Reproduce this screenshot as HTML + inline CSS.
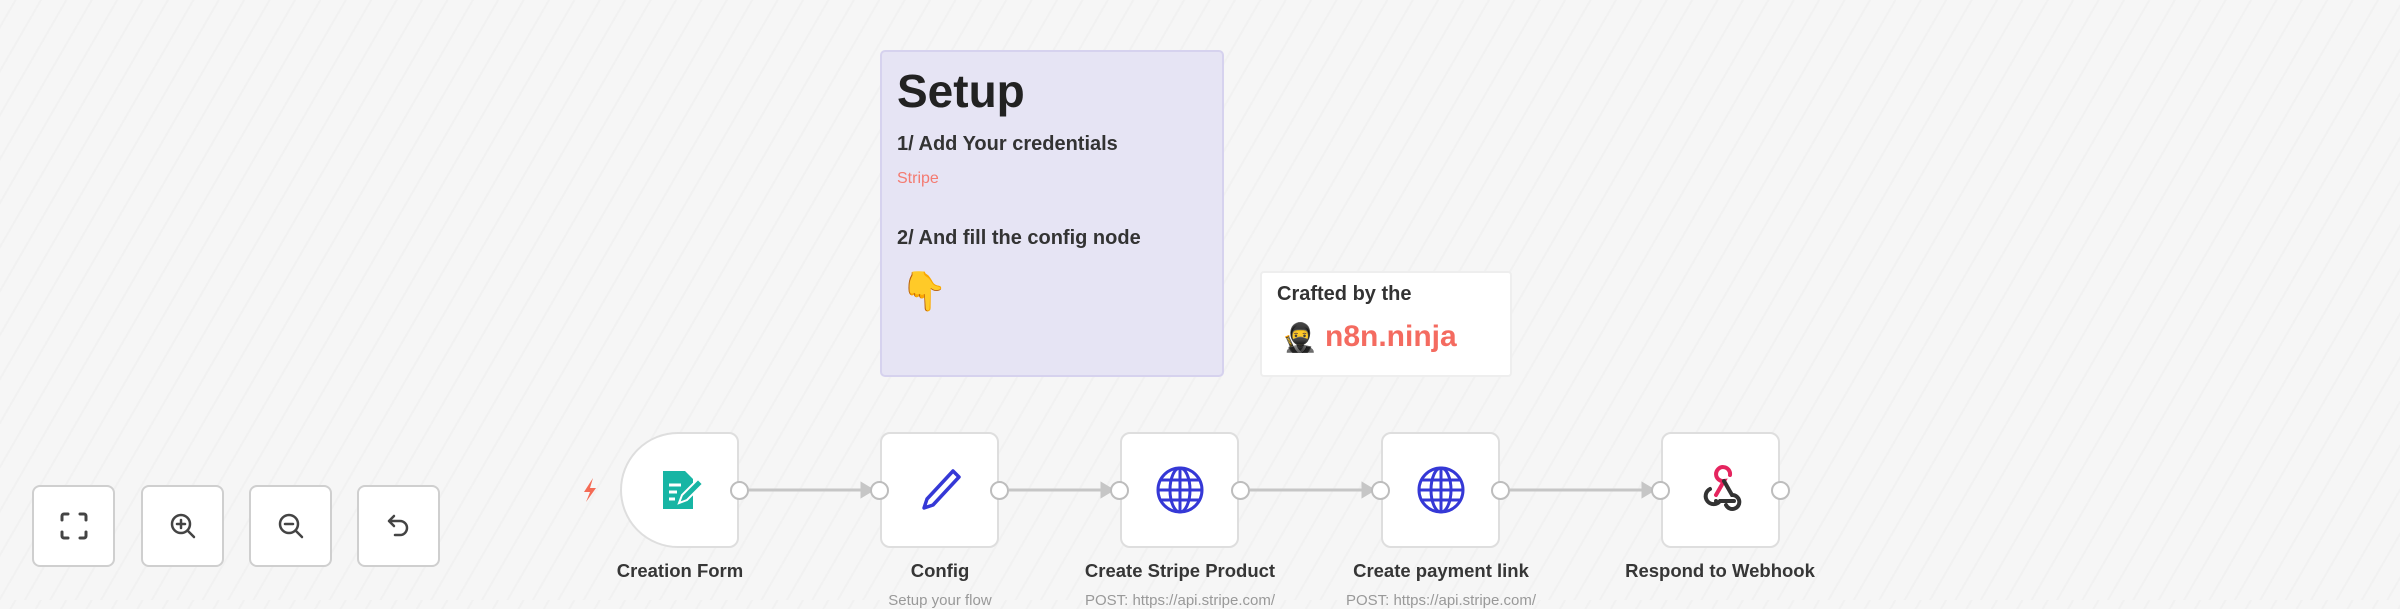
<!DOCTYPE html>
<html><head><meta charset="utf-8"><style>
*{margin:0;padding:0;box-sizing:border-box}
body{width:2400px;height:600px;overflow:hidden;position:relative;font-family:"Liberation Sans",sans-serif;
background:#f6f6f6 repeating-linear-gradient(-60deg,#f6f6f6 0 10px,#f1f1f1 10px 12px,#f6f6f6 12px 22px);}
.abs{position:absolute}
.node{position:absolute;top:432px;width:119px;height:116px;background:#fff;border:2px solid #dedede;border-radius:10px;display:flex;align-items:center;justify-content:center}
.dot{position:absolute;width:19px;height:19px;border-radius:50%;background:#fff;border:2px solid #bdbdbd;top:481px}
.lbl{position:absolute;top:560px;font-size:18.5px;font-weight:bold;color:#363636;text-align:center;width:300px}
.sub{position:absolute;top:592px;font-size:15px;color:#999;text-align:center;width:300px}
.ctl{position:absolute;top:485px;width:83px;height:82px;background:#fff;border:2px solid #cfcfcf;border-radius:8px;display:flex;align-items:center;justify-content:center}
</style></head><body>

<div class="abs" style="left:880px;top:50px;width:344px;height:327px;background:#e6e4f4;border:2px solid #d6d2ee;border-radius:5px"></div>
<div class="abs" style="left:897px;top:64px;font-size:46px;font-weight:bold;color:#222">Setup</div>
<div class="abs" style="left:897px;top:133px;font-size:20px;font-weight:bold;color:#333">1/ Add Your credentials</div>
<div class="abs" style="left:897px;top:170px;font-size:16px;color:#f47a70">Stripe</div>
<div class="abs" style="left:897px;top:227px;font-size:20px;font-weight:bold;color:#333">2/ And fill the config node</div>
<div class="abs" style="left:900px;top:270px;font-size:38px;line-height:44px">👇</div>

<div class="abs" style="left:1260px;top:271px;width:252px;height:106px;background:#fff;border:2px solid #eee;border-radius:4px"></div>
<div class="abs" style="left:1277px;top:283px;font-size:20px;font-weight:bold;color:#333">Crafted by the</div>
<div class="abs" style="left:1282px;top:320px;font-size:28px;line-height:36px">🥷</div>
<div class="abs" style="left:1325px;top:320px;font-size:30px;font-weight:bold;color:#f46b60">n8n.ninja</div>

<svg class="abs" style="left:0;top:0" width="2400" height="600">
<g stroke="#c6c6c6" stroke-width="3" fill="#c6c6c6">
<line x1="749" y1="490" x2="866" y2="490"/><path d="M862 484 L872 490 L862 496Z"/>
<line x1="1009" y1="490" x2="1106" y2="490"/><path d="M1102 484 L1112 490 L1102 496Z"/>
<line x1="1250" y1="490" x2="1367" y2="490"/><path d="M1363 484 L1373 490 L1363 496Z"/>
<line x1="1510" y1="490" x2="1647" y2="490"/><path d="M1643 484 L1653 490 L1643 496Z"/>
</g>
<path d="M593 478 L584 492 L590 492 L586 502 L596 488 L590 488Z" fill="#f46b55"/>
</svg>

<div class="node" style="left:620px;border-radius:58px 10px 10px 58px">
<svg width="50" height="50" viewBox="0 0 50 50"><path d="M8 6h22l8 8v30H8z" fill="#17b5a4"/><g stroke="#fff" stroke-width="3"><line x1="14" y1="20" x2="26" y2="20"/><line x1="14" y1="27" x2="22" y2="27"/><line x1="14" y1="34" x2="20" y2="34"/></g><path d="M24 38l3-8 16-16 5 5-16 16z" fill="#17b5a4" stroke="#fff" stroke-width="2"/></svg></div>
<div class="node" style="left:880px"><svg width="50" height="50" viewBox="0 0 50 50"><path d="M38 6l6 6-26 28-9 3 3-9z" fill="none" stroke="#3538d6" stroke-width="3.5" stroke-linejoin="round"/></svg></div>
<div class="node" style="left:1120px"><svg width="52" height="52" viewBox="0 0 52 52" fill="none" stroke="#3538d6" stroke-width="3"><circle cx="26" cy="26" r="22"/><ellipse cx="26" cy="26" rx="10" ry="22"/><line x1="4" y1="26" x2="48" y2="26"/><line x1="26" y1="4" x2="26" y2="48"/><line x1="7" y1="16" x2="45" y2="16"/><line x1="7" y1="36" x2="45" y2="36"/></svg></div>
<div class="node" style="left:1381px"><svg width="52" height="52" viewBox="0 0 52 52" fill="none" stroke="#3538d6" stroke-width="3"><circle cx="26" cy="26" r="22"/><ellipse cx="26" cy="26" rx="10" ry="22"/><line x1="4" y1="26" x2="48" y2="26"/><line x1="26" y1="4" x2="26" y2="48"/><line x1="7" y1="16" x2="45" y2="16"/><line x1="7" y1="36" x2="45" y2="36"/></svg></div>
<div class="node" style="left:1661px"><svg width="50" height="50" viewBox="0 0 50 50" fill="none" stroke-width="4" stroke-linecap="round"><path d="M20 30 L28 16 A7 7 0 1 1 34 10" stroke="#e5245e"/><path d="M14 24 A8 8 0 1 0 24 36 L38 36" stroke="#333"/><path d="M28 16 L36 30 A7 7 0 1 1 30 40" stroke="#333"/><circle cx="20" cy="36" r="2" fill="#333"/></svg></div>

<div class="dot" style="left:730px"></div>
<div class="dot" style="left:870px"></div><div class="dot" style="left:990px"></div>
<div class="dot" style="left:1110px"></div><div class="dot" style="left:1231px"></div>
<div class="dot" style="left:1371px"></div><div class="dot" style="left:1491px"></div>
<div class="dot" style="left:1651px"></div><div class="dot" style="left:1771px"></div>

<div class="lbl" style="left:530px">Creation Form</div>
<div class="lbl" style="left:790px">Config</div>
<div class="lbl" style="left:1030px">Create Stripe Product</div>
<div class="lbl" style="left:1291px">Create payment link</div>
<div class="lbl" style="left:1570px">Respond to Webhook</div>
<div class="sub" style="left:790px">Setup your flow</div>
<div class="sub" style="left:1030px">POST: https://api.stripe.com/</div>
<div class="sub" style="left:1291px">POST: https://api.stripe.com/</div>

<div class="ctl" style="left:32px"><svg width="30" height="30" viewBox="0 0 30 30" fill="none" stroke="#444" stroke-width="3" stroke-linecap="round"><path d="M3 9V5a2 2 0 0 1 2-2h4M21 3h4a2 2 0 0 1 2 2v4M27 21v4a2 2 0 0 1-2 2h-4M9 27H5a2 2 0 0 1-2-2v-4"/></svg></div>
<div class="ctl" style="left:141px"><svg width="30" height="30" viewBox="0 0 30 30" fill="none" stroke="#444" stroke-width="2.5" stroke-linecap="round"><circle cx="13" cy="13" r="9"/><path d="M20 20l6 6M9 13h8M13 9v8"/></svg></div>
<div class="ctl" style="left:249px"><svg width="30" height="30" viewBox="0 0 30 30" fill="none" stroke="#444" stroke-width="2.5" stroke-linecap="round"><circle cx="13" cy="13" r="9"/><path d="M20 20l6 6M9 13h8"/></svg></div>
<div class="ctl" style="left:357px"><svg width="30" height="30" viewBox="0 0 30 30" fill="none" stroke="#444" stroke-width="2.5" stroke-linecap="round" stroke-linejoin="round"><path d="M10 5L5 10l5 5M5 10h11a7 7 0 0 1 0 14h-5"/></svg></div>
</body></html>
